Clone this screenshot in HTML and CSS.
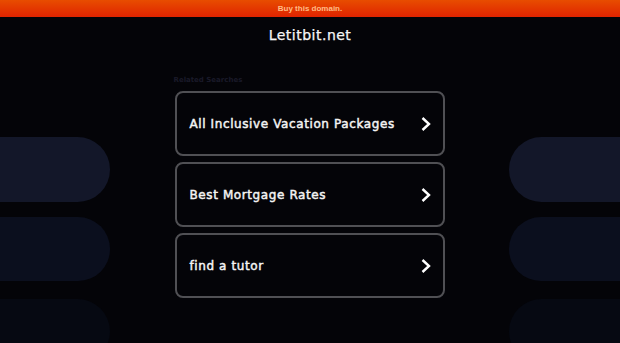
FILE: index.html
```html
<!DOCTYPE html>
<html>
<head>
<meta charset="utf-8">
<link rel="stylesheet" href="styles.css">
</head>
<body>
<div class="topbar"><a class="buy" href="#">Buy this domain.</a></div>
<h1 class="title">Letitbit.net</h1>
<div class="main">
  <div class="side side-left">
    <div class="pill p1"></div>
    <div class="pill p2"></div>
    <div class="pill p3"></div>
  </div>
  <div class="center">
    <div class="label">Related Searches</div>
    <a class="link" href="#"><span>All Inclusive Vacation Packages</span><svg class="chev" width="12" height="16" viewBox="0 0 12 16"><path d="M2.5 2 L9 8 L2.5 14" fill="none" stroke="#fff" stroke-width="2.4"/></svg></a>
    <a class="link" href="#"><span>Best Mortgage Rates</span><svg class="chev" width="12" height="16" viewBox="0 0 12 16"><path d="M2.5 2 L9 8 L2.5 14" fill="none" stroke="#fff" stroke-width="2.4"/></svg></a>
    <a class="link" href="#"><span>find a tutor</span><svg class="chev" width="12" height="16" viewBox="0 0 12 16"><path d="M2.5 2 L9 8 L2.5 14" fill="none" stroke="#fff" stroke-width="2.4"/></svg></a>
  </div>
  <div class="side side-right">
    <div class="pill p1"></div>
    <div class="pill p2"></div>
    <div class="pill p3"></div>
  </div>
</div>
</body>
</html>
```
FILE: styles.css
```css
html, body {
  margin: 0;
  padding: 0;
  background: #040408;
  height: 100%;
  overflow: hidden;
}
body {
  font-family: "DejaVu Sans", sans-serif;
  color: #fff;
}
.topbar {
  height: 17px;
  background: linear-gradient(to bottom, #e84d00, #df2300);
  display: flex;
  align-items: center;
  justify-content: center;
}
.buy {
  font-family: "Liberation Sans", Arial, sans-serif;
  font-weight: bold;
  font-size: 8px;
  color: #ffbd85;
  text-decoration: none;
}
.title {
  margin: 0;
  padding-top: 9px;
  height: 36px;
  text-align: center;
  font-size: 14px;
  font-weight: normal;
  letter-spacing: 0.5px;
  color: #f6f6f6;
  line-height: 18px;
  -webkit-text-stroke: 0.25px #f6f6f6;
}
.main {
  display: grid;
  grid-template-columns: 110px 1fr 111px;
  padding-top: 11px;
}
.side {
  display: flex;
  flex-direction: column;
  padding-top: 64px;
}
.pill {
  height: 65px;
  margin-bottom: 15px;
}
.p2 { height: 64px; margin-bottom: 18px; }
.side-left .pill { border-radius: 0 33px 33px 0; }
.side-right .pill { border-radius: 33px 0 0 33px; }
.p1 { background: #131729; }
.p2 { background: #0b0f1e; }
.p3 { background: #060912; }
.center {
  display: flex;
  flex-direction: column;
  align-items: center;
  gap: 6px;
}
.label {
  width: 272px;
  font-size: 7px;
  color: #1a1a28;
  font-weight: bold;
  height: 9px;
  line-height: 9px;
  margin-top: 3px;
}
.link {
  box-sizing: border-box;
  width: 270px;
  height: 65px;
  border: 2px solid #505054;
  border-radius: 8px;
  background: #040408;
  display: flex;
  align-items: center;
  justify-content: space-between;
  padding: 0 11px 0 13px;
  color: #f4f4f4;
  text-decoration: none;
  font-size: 12px;
  font-weight: normal;
  letter-spacing: 0.6px;
  -webkit-text-stroke: 0.45px #f4f4f4;
}
.chev { display: block; }
```
